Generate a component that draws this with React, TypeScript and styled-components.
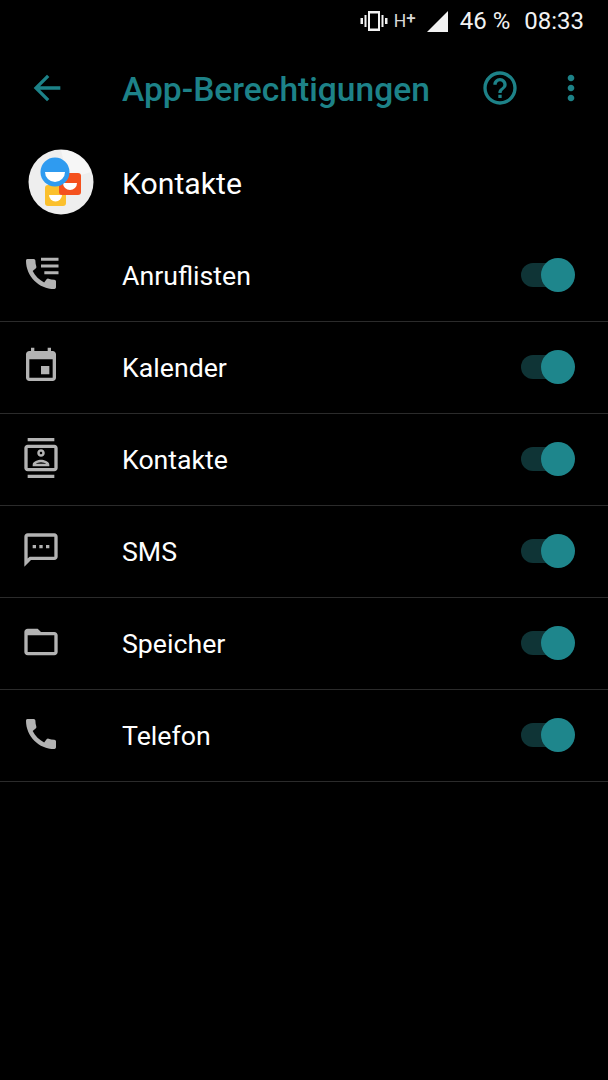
import React, { FC } from "react";
import styled, { createGlobalStyle } from "styled-components";

const GlobalStyle = createGlobalStyle`
  html, body { margin: 0; padding: 0; background: #000; }
  body { font-family: Roboto, "Liberation Sans", sans-serif; color: #fff; }
`;

const Screen = styled.div`
  width: 608px;
  height: 1080px;
  background: #000;
  overflow: hidden;
`;

const StatusBar = styled.div`
  height: 42px;
  display: flex;
  align-items: center;
  justify-content: flex-end;
  padding-right: 24px;
  box-sizing: border-box;
  font-size: 24px;
  color: #f2f2f2;
`;

const NetworkType = styled.span`
  display: flex;
  align-items: flex-start;
  width: 27px;
  margin-left: 6px;
  margin-right: 6px;
  font-size: 17.500px;
  line-height: 18px;
  color: #d8d8d8;
`;

const NetworkPlus = styled.span`
  font-size: 17px;
  line-height: 12px;
  font-weight: 500;
`;

const Battery = styled.span`
  margin-left: 12px;
`;

const Clock = styled.span`
  margin-left: 14px;
`;

const AppBar = styled.div`
  height: 94px;
  display: flex;
  align-items: center;
  padding-right: 17px;
  color: #1d8288;
`;

const BackSlot = styled.div`
  width: 122px;
  padding-left: 27px;
  margin-bottom: 2px;
  box-sizing: border-box;
  display: flex;
`;

const Title = styled.div`
  flex: 1;
  font-size: 33.600px;
  font-weight: 500;
`;

const ActionSlot = styled.div<{ $gap: number }>`
  margin-left: ${(p) => p.$gap}px;
  margin-bottom: 2px;
  display: flex;
`;

const HeaderRow = styled.div`
  height: 94px;
  display: flex;
  align-items: center;
  font-size: 30.200px;
`;

const LeadSlot = styled.div`
  width: 94px;
  margin-left: 28px;
  margin-top: -3px;
  display: flex;
  flex-shrink: 0;
`;

const Row = styled.div`
  height: 91px;
  display: flex;
  align-items: center;
  border-bottom: 1px solid #2b2b2b;
  font-size: 26.700px;
`;

const RowIcon = styled.div`
  width: 101px;
  padding-left: 21px;
  margin-top: -3px;
  display: flex;
  color: #b3b3b3;
`;

const RowLabel = styled.div`
  flex: 1;
`;

const SwitchTrack = styled.div`
  position: relative;
  width: 49px;
  height: 24px;
  margin-right: 38px;
  margin-top: -1px;
  border-radius: 12px;
  background: #0f3436;
`;

const SwitchThumb = styled.div`
  position: absolute;
  top: -5px;
  left: 20px;
  width: 34px;
  height: 34px;
  border-radius: 50%;
  background: #1e868c;
`;

const Glyph: FC<{ d: string; extra?: React.ReactNode }> = ({ d, extra }) => (
  <svg width={40} height={40} viewBox="0 0 24 24" fill="currentColor">
    <path d={d} />
    {extra}
  </svg>
);

const PHONE =
  "M20.010 15.380c-1.230 0-2.420-.2-3.530-.56-.35-.12-.74-.03-1.010.24l-1.570 1.970c-2.830-1.350-5.480-3.900-6.890-6.830l1.950-1.660c.27-.28.35-.67.24-1.020-.37-1.110-.56-2.300-.56-3.530 0-.54-.45-.99-.99-.99H4.190C3.650 3 3 3.240 3 3.990 3 13.280 10.730 21 20.010 21c.71 0 .99-.63.99-1.180v-3.450c0-.54-.45-.99-.99-.99z";

const permissions = [
  {
    label: "Anruflisten",
    icon: <Glyph d={PHONE} extra={<path d="M12 2.200h10.500v1.800H12zM12 6.300h10.500v1.800H12zM14 10.300h8.500v1.800H14z" />} />,
  },
  {
    label: "Kalender",
    icon: (
      <Glyph d="M17 12h-5v5h5v-5zM16 1v2H8V1H6v2H5c-1.110 0-1.990.9-1.990 2L3 19c0 1.100.89 2 2 2h14c1.100 0 2-.9 2-2V5c0-1.100-.9-2-2-2h-1V1h-2zm3 18H5V8h14v11z" />
    ),
  },
  {
    label: "Kontakte",
    icon: (
      <Glyph d="M20 0H4v2h16V0zM4 24h16v-2H4v2zM20 4H4c-1.100 0-2 .9-2 2v12c0 1.100.9 2 2 2h16c1.100 0 2-.9 2-2V6c0-1.100-.9-2-2-2zm0 14H4V6h16v12zm-8-6.750c1.240 0 2.250-1.010 2.250-2.250S13.240 6.750 12 6.750 9.750 7.760 9.750 9s1.010 2.250 2.250 2.250zm0-3c.41 0 .75.34.75.75s-.34.75-.75.75-.75-.34-.75-.75.34-.75.75-.75zM17 15.990c0-2.090-3.310-2.990-5-2.990s-5 .9-5 2.990V17h10v-1.010zm-8.190-.49c.61-.52 2.030-1 3.190-1 1.170 0 2.590.48 3.200 1H8.810z" />
    ),
  },
  {
    label: "SMS",
    icon: (
      <Glyph d="M20 2H4c-1.100 0-1.990.9-1.990 2L2 22l4-4h14c1.100 0 2-.9 2-2V4c0-1.100-.9-2-2-2zm0 14H5.170L4 17.170V4h16v12zM7 9h2v2H7zm4 0h2v2h-2zm4 0h2v2h-2z" />
    ),
  },
  {
    label: "Speicher",
    icon: (
      <Glyph d="M20 6h-8l-2-2H4c-1.100 0-1.990.9-1.990 2L2 18c0 1.100.9 2 2 2h16c1.100 0 2-.9 2-2V8c0-1.100-.9-2-2-2zm0 12H4V8h16v10z" />
    ),
  },
  { label: "Telefon", icon: <Glyph d={PHONE} /> },
];

const ContactsLogo: FC = () => (
  <svg width="66" height="66" viewBox="0 0 66 66">
    <circle cx="33" cy="33" r="32.500" fill="#eeeeee" />
    <path d="M33 1a32 32 0 0 1 30 22L40 30z" fill="#f6f6f6" />
    <rect x="17" y="36" width="21" height="21" rx="3" fill="#fbc02d" />
    <path d="M21 46h13a6.500 6.500 0 0 1-13 0z" fill="#fff" />
    <rect x="31" y="24" width="22" height="22" rx="3" fill="#f4511e" />
    <path d="M35 34h14a7 7 0 0 1-14 0z" fill="#fff" />
    <circle cx="27" cy="23" r="14.500" fill="#2f9bf0" />
    <path d="M17 23h20a10 10 0 0 1-20 0z" fill="#fff" />
  </svg>
);

export default function App() {
  return (
    <Screen>
      <GlobalStyle />
      <StatusBar>
        <svg width="28" height="20" viewBox="0 0 28 20" fill="currentColor">
          <path
            d="M8 0h12v20H8zM10 2.500v15h8v-15zM4.500 4h2v12h-2zM21.500 4h2v12h-2zM0.500 7h2.500v6H0.500zM25 7h2.500v6H25z"
            fillRule="evenodd"
          />
        </svg>
        <NetworkType>
          H<NetworkPlus>+</NetworkPlus>
        </NetworkType>
        <svg width="21" height="21" viewBox="0 0 21 21" fill="currentColor">
          <path d="M21 0v21H0z" />
        </svg>
        <Battery>46 %</Battery>
        <Clock>08:33</Clock>
      </StatusBar>
      <AppBar>
        <BackSlot>
          <Glyph d="M20 11H7.830l5.590-5.590L12 4l-8 8 8 8 1.410-1.410L7.830 13H20v-2z" />
        </BackSlot>
        <Title>App-Berechtigungen</Title>
        <ActionSlot $gap={0}>
          <Glyph d="M11 18h2v-2h-2v2zm1-16C6.480 2 2 6.480 2 12s4.480 10 10 10 10-4.480 10-10S17.520 2 12 2zm0 18c-4.410 0-8-3.590-8-8s3.590-8 8-8 8 3.590 8 8-3.590 8-8 8zm0-14c-2.210 0-4 1.790-4 4h2c0-1.100.9-2 2-2s2 .9 2 2c0 2-3 1.750-3 5h2c0-2.250 3-2.500 3-5 0-2.210-1.790-4-4-4z" />
        </ActionSlot>
        <ActionSlot $gap={31}>
          <Glyph d="M12 8c1.100 0 2-.9 2-2s-.9-2-2-2-2 .9-2 2 .9 2 2 2zm0 2c-1.100 0-2 .9-2 2s.9 2 2 2 2-.9 2-2-.9-2-2-2zm0 6c-1.100 0-2 .9-2 2s.9 2 2 2 2-.9 2-2-.9-2-2-2z" />
        </ActionSlot>
      </AppBar>
      <HeaderRow>
        <LeadSlot>
          <ContactsLogo />
        </LeadSlot>
        Kontakte
      </HeaderRow>
      {permissions.map((p) => (
        <Row key={p.label}>
          <RowIcon>{p.icon}</RowIcon>
          <RowLabel>{p.label}</RowLabel>
          <SwitchTrack>
            <SwitchThumb />
          </SwitchTrack>
        </Row>
      ))}
    </Screen>
  );
}
